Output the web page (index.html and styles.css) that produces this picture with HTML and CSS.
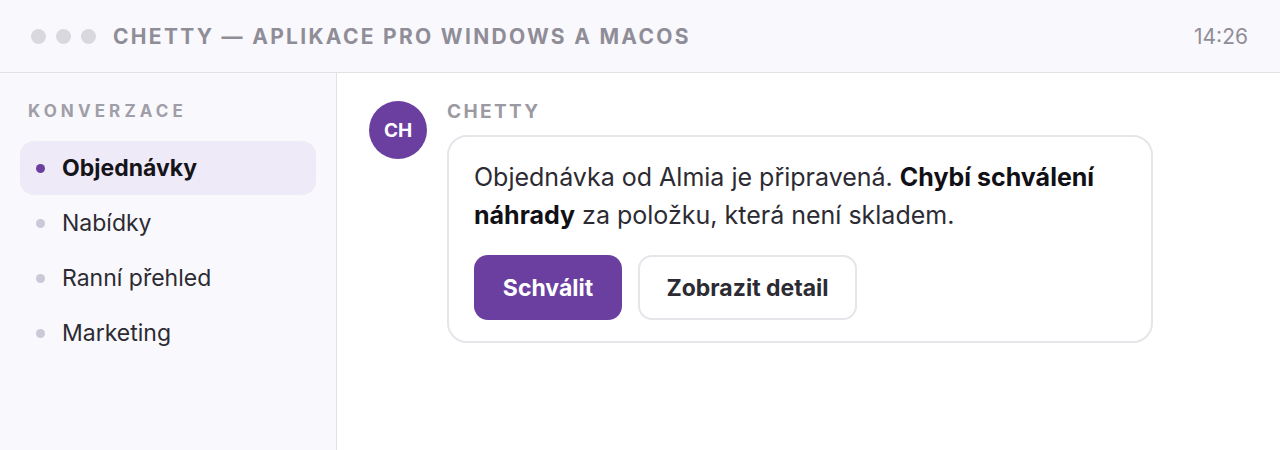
FILE: index.html
```html
<!DOCTYPE html>
<html lang="cs">
<head>
<meta charset="utf-8">
<link rel="stylesheet" href="styles.css">
</head>
<body>
<div class="app">
  <header class="titlebar">
    <div class="dots"><span class="dot"></span><span class="dot"></span><span class="dot"></span></div>
    <div class="title">CHETTY — APLIKACE PRO WINDOWS A MACOS</div>
    <div class="time">14:26</div>
  </header>
  <div class="body">
    <aside class="sidebar">
      <div class="section-label">KONVERZACE</div>
      <nav class="nav">
        <div class="nav-item active"><span class="bullet"></span>Objednávky</div>
        <div class="nav-item"><span class="bullet"></span>Nabídky</div>
        <div class="nav-item"><span class="bullet"></span>Ranní přehled</div>
        <div class="nav-item"><span class="bullet"></span>Marketing</div>
      </nav>
    </aside>
    <main class="main">
      <div class="message">
        <div class="avatar">CH</div>
        <div class="msg-content">
          <div class="sender">CHETTY</div>
          <div class="bubble">
            <p class="msg-text">Objednávka od Almia je připravená. <strong>Chybí schválení náhrady</strong> za položku, která není skladem.</p>
            <div class="actions">
              <button class="btn primary">Schválit</button>
              <button class="btn secondary">Zobrazit detail</button>
            </div>
          </div>
        </div>
      </div>
    </main>
  </div>
</div>
</body>
</html>
```
FILE: styles.css
```css
* { box-sizing: border-box; }
html, body { margin: 0; padding: 0; }
body {
  font-family: Inter, "Noto Sans", sans-serif;
  background: #ffffff;
  width: 1280px;
  height: 450px;
  overflow: hidden;
}
.app { display: flex; flex-direction: column; height: 450px; }
.titlebar {
  height: 73px;
  flex: none;
  display: flex;
  align-items: center;
  padding: 0 32px 0 31px;
  background: #f9f8fc;
  border-bottom: 1px solid #e2e1e6;
}
.dots { display: flex; gap: 10px; }
.dot { width: 15px; height: 15px; border-radius: 50%; background: #d9d8de; }
.title {
  margin-left: 17px;
  font-size: 21px;
  font-weight: 700;
  letter-spacing: 2.3px;
  color: #8f8d97;
}
.time {
  margin-left: auto;
  font-size: 21px;
  color: #8f8d97;
}
.body { flex: 1; display: flex; min-height: 0; }
.sidebar {
  width: 337px;
  flex: none;
  background: #f9f8fc;
  border-right: 1px solid #e2e1e6;
  padding: 28px 20px 0 20px;
}
.section-label {
  padding-left: 8px;
  font-size: 17px;
  font-weight: 700;
  letter-spacing: 4.1px;
  color: #a09ea8;
  line-height: 20px;
}
.nav { margin-top: 20px; display: flex; flex-direction: column; gap: 1px; }
.nav-item {
  height: 54px;
  display: flex;
  align-items: center;
  padding-left: 16px;
  border-radius: 14px;
  font-size: 23px;
  color: #2c2b33;
  width: 296px;
}
.nav-item.active {
  background: #efeaf8;
  font-weight: 700;
  color: #15141a;
}
.bullet {
  width: 9px; height: 9px; border-radius: 50%;
  background: #cbc8d8;
  margin-right: 17px;
}
.active .bullet { background: #6b3fa0; }
.main { flex: 1; padding: 28px 0 0 32px; }
.message { display: flex; gap: 20px; }
.avatar {
  width: 58px; height: 58px; border-radius: 50%;
  background: #6b3fa0;
  color: #ffffff;
  font-weight: 700;
  font-size: 19px;
  display: flex; align-items: center; justify-content: center;
  flex: none;
}
.msg-content { display: flex; flex-direction: column; }
.sender {
  font-size: 19px;
  font-weight: 700;
  letter-spacing: 2.4px;
  color: #9b99a2;
  line-height: 22px;
  margin-top: 0;
}
.bubble {
  margin-top: 12px;
  width: 706px;
  background: #ffffff;
  border: 2px solid #e6e5ea;
  border-radius: 20px;
  padding: 21px 25px 21px 25px;
}
.msg-text {
  margin: 0;
  font-size: 25px;
  line-height: 38px;
  color: #2c2b33;
}
.msg-text strong { color: #111016; font-weight: 700; }
.actions { display: flex; gap: 16px; margin-top: 21px; }
.btn {
  font-family: inherit;
  font-size: 23px;
  font-weight: 700;
  height: 65px;
  border-radius: 14px;
  cursor: pointer;
}
.btn.primary {
  background: #6b3fa0;
  color: #ffffff;
  border: none;
  width: 148px;
  padding: 0;
}
.btn.secondary {
  background: #ffffff;
  color: #2c2b33;
  border: 2px solid #e6e5ea;
  width: 219px;
  padding: 0;
}
```
